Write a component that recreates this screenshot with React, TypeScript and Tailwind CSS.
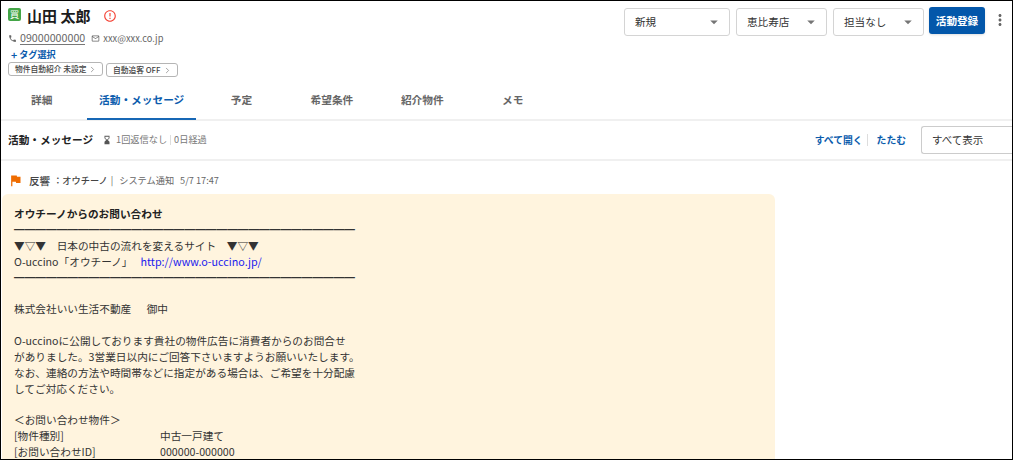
import { ChevronRight } from 'lucide-react'
import type React from 'react'
import { useState } from 'react'
import { MdArrowDropDown, MdErrorOutline, MdFlag, MdHourglassBottom, MdMoreVert, MdOutlineEmail, MdPhone } from 'react-icons/md'

const TABS = ['詳細', '活動・メッセージ', '予定', '希望条件', '紹介物件', 'メモ']

const RULE = '━'.repeat(32)

type SelectBoxProps = {
  label: string
  className: string
}

const SelectBox: React.FC<SelectBoxProps> = ({ label, className }) => (
  <button
    type="button"
    className={`flex h-7 items-center justify-between rounded-[3px] border border-[#d4d4d4] pl-2.5 pr-1.5 text-[10.6px] text-[#333] ${className}`}
  >
    {label}
    <MdArrowDropDown className="size-[18px] text-[#757575]" />
  </button>
)

const Chip: React.FC<{ label: string; className: string }> = ({ label, className }) => (
  <button
    type="button"
    className={`flex h-3.5 items-center justify-between rounded-[3px] border border-[#b5b5b5] pl-1.5 pr-[5px] text-[7.75px] font-medium whitespace-nowrap text-[#444] ${className}`}
  >
    {label}
    <ChevronRight className="size-[9px] text-[#888]" strokeWidth={2} />
  </button>
)

const Header: React.FC = () => (
  <header className="flex h-20 items-start justify-between">
    {/* 顧客情報 */}
    <div className="pl-[7px]">
      <div className="flex h-[30px] items-center">
        <span className="mb-[3px] flex size-[13px] items-center justify-center rounded-[2px] bg-[#43a547] text-[9.5px] leading-none text-white">
          買
        </span>
        <h1 className="ml-1.5 text-[15px] font-bold text-[#1c1c1c]">山田 太郎</h1>
        <MdErrorOutline className="ml-[13px] size-3.5 text-[#f44336]" />
      </div>
      <div className="flex h-[15px] items-center text-[#666]">
        <MdPhone className="size-[9px]" />
        <a href="tel:09000000000" className="ml-[3px] border-b border-[#777] text-[10.7px] leading-[12px]">
          09000000000
        </a>
        <MdOutlineEmail className="ml-1.5 size-[9px]" />
        <span className="ml-[3px] text-[9.3px]">xxx@xxx.co.jp</span>
      </div>
      <button type="button" className="flex h-[17px] items-center pl-[3px] text-[9.1px] font-bold text-[#0b5cad]">
        <span className="mr-0.5 text-[10.5px]">+</span>タグ選択
      </button>
      <div className="-mt-px flex gap-[3px]">
        <Chip label="物件自動紹介 未設定" className="w-[95px]" />
        <Chip label="自動追客 OFF" className="mt-px w-[72px]" />
      </div>
    </div>

    {/* 操作エリア */}
    <div className="flex items-start pt-[7px]">
      <SelectBox label="新規" className="w-[106px]" />
      <SelectBox label="恵比寿店" className="ml-1.5 w-[91px]" />
      <SelectBox label="担当なし" className="ml-1.5 w-[91px]" />
      <button
        type="button"
        className="-mt-px ml-[5px] h-[27px] w-14 rounded-[3px] bg-[#0357aa] text-[10.6px] font-bold text-white shadow"
      >
        活動登録
      </button>
      <MdMoreVert className="mr-[3px] ml-1.5 mt-[3px] size-[18px] text-[#666]" />
    </div>
  </header>
)

const App: React.FC = () => {
  const [activeTab, setActiveTab] = useState(TABS[1])

  return (
    <div className="h-[460px] w-[1013px] overflow-hidden border border-black bg-white font-['Noto_Sans_CJK_JP',sans-serif]">
      <Header />

      {/* タブ */}
      <nav className="flex h-10 border-b-2 border-[#f0f0f0] pt-px">
        {TABS.map((tab) => (
          <button
            key={tab}
            type="button"
            onClick={() => setActiveTab(tab)}
            className={`h-[38px] min-w-[90.4px] border-b-2 px-3 text-[10.7px] font-bold whitespace-nowrap first:-ml-[4.4px] ${
              tab === activeTab ? 'border-[#1767b5] text-[#0b5cad]' : 'border-transparent text-[#666]'
            }`}
          >
            {tab}
          </button>
        ))}
      </nav>

      {/* ツールバー */}
      <div className="flex h-10 items-center border-b-2 border-[#f0f0f0] pl-[7px]">
        <h2 className="text-[10.67px] font-bold text-[#222]">活動・メッセージ</h2>
        <MdHourglassBottom className="ml-[9px] size-2.5 text-[#555]" />
        <div className="ml-1 flex items-center text-[9.2px] text-[#777]">
          1回返信なし
          <span className="mx-[3px] h-2.5 w-px bg-[#ddd]" />
          0日経過
        </div>
        <div className="ml-auto flex items-center text-[9.8px] font-bold text-[#0b5cad]">
          <button type="button">すべて開く</button>
          <span className="ml-1 mr-[9px] h-3 w-px bg-[#ddd]" />
          <button type="button">たたむ</button>
        </div>
        <button
          type="button"
          className="ml-[15px] h-7 w-[91px] rounded-l-[3px] border border-r-0 border-[#ccc] pl-2.5 text-left text-[10.5px] text-[#333]"
        >
          すべて表示
        </button>
      </div>

      {/* メッセージ見出し */}
      <div className="flex h-[33px] items-center pt-1.5 pl-[7px] text-[9.2px] text-[#666]">
        <MdFlag className="size-[15px] text-[#ef6c00]" />
        <span className="ml-1.5 text-[10.6px] font-medium text-[#444]">反響</span>
        <span className="ml-[3px] font-medium text-[#444]">：オウチーノ</span>
        <span className="ml-[3px]">|</span>
        <span className="ml-1.5">システム通知</span>
        <time className="ml-1.5">5/7 17:47</time>
      </div>

      {/* 本文 */}
      <article className="ml-px h-[280px] w-[773px] rounded-md bg-[#fff4de] px-3 pt-3 text-[10.67px] leading-[15.87px] whitespace-pre text-[#333]">
        <p className="font-bold text-[#222]">オウチーノからのお問い合わせ</p>
        <p>{RULE}</p>
        <p>▼▽▼　日本の中古の流れを変えるサイト　▼▽▼</p>
        <p>
          O-uccino「オウチーノ」
          <a href="http://www.o-uccino.jp/" className="ml-2 text-[10.75px] text-[#1a1aee]">
            http://www.o-uccino.jp/
          </a>
        </p>
        <p>{RULE}</p>
        <br />
        <p>株式会社いい生活不動産　{'  '}御中</p>
        <br />
        <p>O-uccinoに公開しております貴社の物件広告に消費者からのお問合せ</p>
        <p>がありました。3営業日以内にご回答下さいますようお願いいたします。</p>
        <p>なお、連絡の方法や時間帯などに指定がある場合は、ご希望を十分配慮</p>
        <p>してご対応ください。</p>
        <br />
        <p>＜お問い合わせ物件＞</p>
        <dl className="grid grid-cols-[146px_1fr]">
          <dt>[物件種別]</dt>
          <dd>中古一戸建て</dd>
          <dt>[お問い合わせID]</dt>
          <dd>000000-000000</dd>
        </dl>
      </article>
    </div>
  )
}

export default App
